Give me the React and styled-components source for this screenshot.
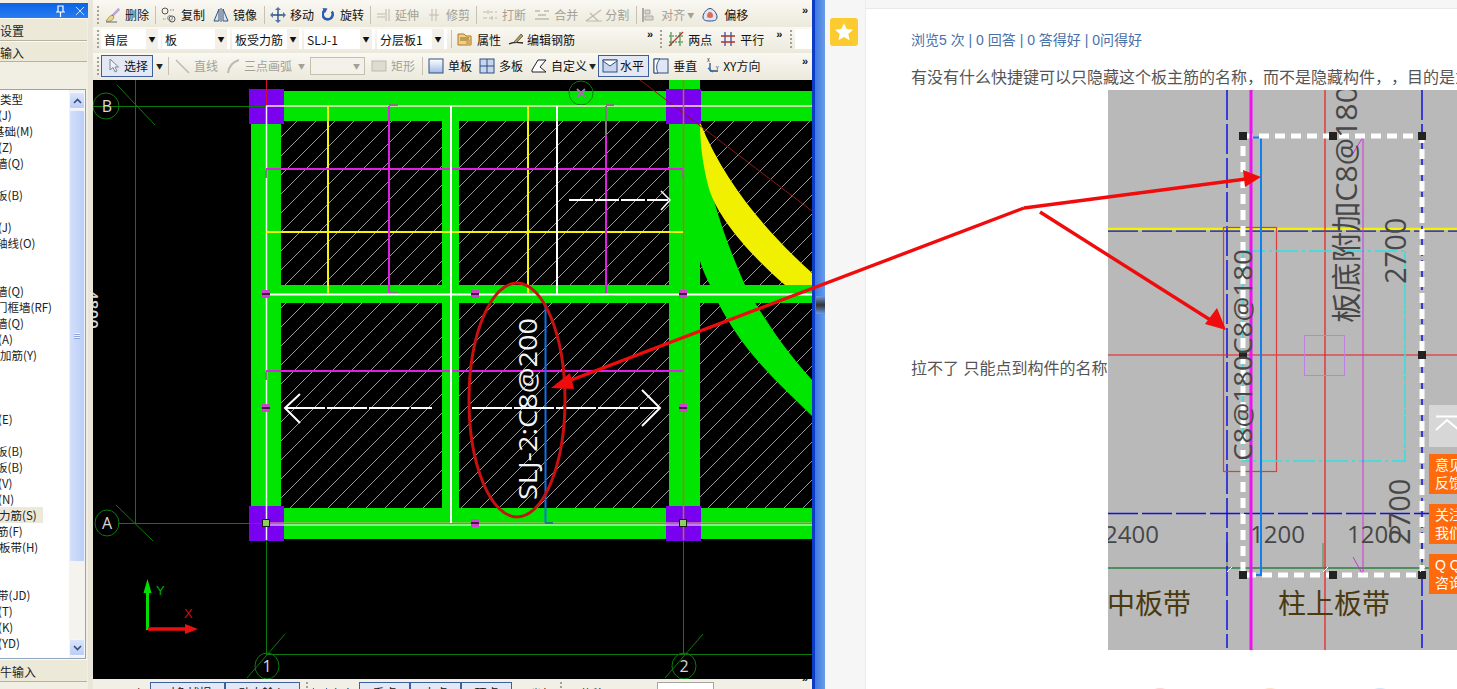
import React from 'react';
import styled, { createGlobalStyle } from 'styled-components';

const Global = createGlobalStyle`
  html, body { margin: 0; padding: 0; width: 1457px; height: 689px; overflow: hidden; background: #fff; }
  body { font-family: "Noto Sans CJK SC", "Liberation Sans", sans-serif; text-spacing-trim: space-all; }
`;

const Page = styled.div`
  position: relative; display: flex; width: 1457px; height: 689px; overflow: hidden;
`;
const CadWindow = styled.div`
  display: flex; width: 812px; height: 689px; flex: none; background: #e9e6d9;
`;

/* ---------- left docked panel ---------- */
const Dock = styled.div`
  width: 88px; flex: none; display: flex; flex-direction: column; padding-top: 3px; box-sizing: border-box;
  background: #f1efe4; font-size: 12px; color: #222; margin-right: 5px; height: 689px;
`;
const DockTitle = styled.div`
  height: 15px; flex: none; display: flex; align-items: center; justify-content: flex-end; gap: 9px; padding-right: 3px;
  background: linear-gradient(#0a62e4, #2a7cf0); color: #fff;
`;
const DockRow = styled.div`
  height: ${p => p.$h}px; flex: none; line-height: ${p => p.$h}px; background: #ece9d8; overflow: hidden; white-space: nowrap;
  border-top: 1px solid #fbfaf5; border-bottom: 1px solid #b5b2a2; box-sizing: border-box; margin-right: 1px;
`;
const DockGap = styled.div`height: 27px; flex: none;`;
const ListBox = styled.div`
  display: flex; height: 570px; flex: none; background: #fff; border: 1px solid #8ea5bd; border-left: 0; box-sizing: border-box; margin-right: 2px;
`;
const ListItems = styled.div`
  width: 69px; flex: none; padding-top: 1px; overflow: hidden;
`;
const ListItem = styled.div`
  height: 16px; line-height: 16px; white-space: nowrap; font-size: 11.5px; width: ${p => p.$active ? 43 : 69}px;
  background: ${p => p.$active ? '#ece9d8' : 'transparent'}; overflow: hidden;
  & > span { display: inline-block; margin-left: ${p => p.$shift || 0}px; }
`;
const ScrollBar = styled.div`
  width: 16px; flex: none; display: flex; flex-direction: column; padding: 2px 0; box-sizing: border-box; background: #f4f3ee;
`;
const ScrollBtn = styled.div`
  height: 17px; flex: none; display: flex; align-items: center; justify-content: center; border-radius: 2px;
  background: linear-gradient(#dbe5fb, #bccdf5); border: 1px solid #f4f6fd; box-sizing: border-box;
`;
const ScrollThumb = styled.div`
  height: 452px; flex: none; display: flex; align-items: center; justify-content: center; border-radius: 2px; margin-top: 1px;
  background: linear-gradient(90deg, #d3defa, #bccef8); border: 1px solid #eef2fd; box-sizing: border-box;
`;
const ScrollSpace = styled.div`flex: 1;`;
const Grip = styled.div`
  width: 6px; height: 6px; background: repeating-linear-gradient(#eef2fd 0 1px, #8ea5d8 1px 2px);
`;

/* ---------- main CAD column ---------- */
const CadMain = styled.div`
  width: 719px; flex: none; display: flex; flex-direction: column; font-size: 12px; color: #111;
`;
const Bar = styled.div`
  height: ${p => p.$h || 27}px; flex: none; display: flex; align-items: center; overflow: hidden; box-sizing: border-box;
  padding-left: ${p => p.$pl ?? 4}px; padding-top: ${p => p.$pt || 0}px; padding-bottom: ${p => p.$pb || 0}px;
  background: linear-gradient(#f9f8f2, #ece9dc); white-space: nowrap;
`;
const GripBar = styled.i`
  display: block; width: 2px; height: 18px; flex: none; margin-right: ${p => p.$mr ?? 6}px; margin-left: ${p => p.$ml || 0}px;
  background: repeating-linear-gradient(#a5a294 0 2px, transparent 2px 4px);
`;
const Tool = styled.div`
  display: flex; align-items: center; flex: none; gap: ${p => p.$gap ?? 4}px; margin-right: ${p => p.$mr ?? 8}px;
  color: ${p => p.$off ? '#a3a195' : '#111'};
  height: 22px; box-sizing: border-box;
  & svg { display: block; flex: none; }
`;
const ActiveTool = styled(Tool)`
  border: 1px solid #3c5f9e; background: #e3e8f4; padding: 0 4px 0 ${p => p.$pl ?? 4}px;
`;
const Sep = styled.i`
  display: block; width: 1px; height: 18px; flex: none; background: #c5c2b4; margin: 0 5px 0 -2px;
`;
const Caret = styled.span`
  width: 7px; overflow: hidden; font-size: 7px; color: ${p => p.$off ? '#a3a195' : '#222'}; margin: 0 ${p => p.$mr ?? 0}px 0 ${p => p.$ml ?? 0}px; flex: none;
`;
const More = styled.span`
  font-family: "Liberation Sans", sans-serif; font-weight: 700; font-size: 11px; letter-spacing: -1px; color: #111; flex: none;
  margin-left: ${p => p.$ml || 'auto'}; margin-right: ${p => p.$mr ?? 5}px; margin-top: -10px;
`;
const Select = styled.div`
  width: ${p => p.$w}px; height: 20px; flex: none; background: #fff; display: flex; align-items: center; justify-content: space-between;
  padding-left: 3px; box-sizing: border-box; margin-right: ${p => p.$mr ?? 3}px; font-size: 12px;
`;
const SelectArrow = styled.span`
  width: 12px; height: 20px; display: flex; align-items: center; justify-content: center; background: #f2f0e8; font-size: 7px; margin-right: 3px;
`;
const DisabledSelect = styled.div`
  width: 55px; height: 18px; flex: none; margin-right: 6px; background: #f3f1ea; border: 1px solid #c3c0b0; box-sizing: border-box;
  display: flex; align-items: center; justify-content: flex-end; padding-right: 4px; font-size: 7px; color: #a3a195;
`;
const Canvas = styled.svg`
  display: block; width: 719px; height: 599px; flex: none; background: #000;
`;
const BottomBar = styled(Bar)`
  align-items: flex-start; padding-top: 3px; background: #f1efe6; height: 10px; padding-left: 7px;
`;
const BottomItem = styled.div`
  flex: none; width: ${p => p.$w}px; height: 22px; line-height: 20px; box-sizing: border-box; margin-right: ${p => p.$mr ?? 0}px;
  border: 1px solid ${p => p.$plain ? '#a8a69a' : '#3c5f9e'}; background: ${p => p.$plain ? '#fff' : '#e3e8f4'};
  text-align: center; font-size: 12px;
`;

/* ---------- window edge + rail ---------- */
const WindowEdge = styled.div`
  position: relative; width: 13px; flex: none; display: flex;
`;
const EdgeDark = styled.div`width: 3px; background: #0c3cc4;`;
const EdgeLight = styled.div`width: 10px; background: linear-gradient(90deg, #3d78e4, #6a9be6);`;
const EdgeNotch = styled.div`
  position: absolute; left: 4px; top: 296px; width: 9px; height: 18px; background: linear-gradient(#6a9be6, #333 50%, #6a9be6);
`;
const Rail = styled.div`
  width: 40px; flex: none; background: #f6f6f6; padding: 18px 0 0 5px; box-sizing: border-box;
`;
const StarButton = styled.div`
  width: 28px; height: 28px; border-radius: 3px; background: #fccb2f; display: flex; align-items: center; justify-content: center;
`;

/* ---------- article ---------- */
const Article = styled.div`
  flex: 1; min-width: 0; border-left: 1px solid #ececec; background: #fff; overflow: hidden; position: relative;
  font-family: "Liberation Sans", "Noto Sans CJK SC", sans-serif;
`;
const ArticleTop = styled.div`height: 8px; background: #f6f6f6; border-bottom: 1px solid #e8e8e8;`;
const ArticleBody = styled.div`padding: 21px 0 0 45px; width: 900px;`;
const Stats = styled.div`
  font-size: 14px; line-height: 20px; color: #4a70a8; white-space: nowrap;
`;
const Para = styled.p`
  margin: 18px 0 0; font-size: 16px; line-height: 20px; color: #555; white-space: nowrap;
`;
const InlineLine = styled.div`
  margin-top: 2px; font-size: 16px; color: #555; white-space: nowrap; line-height: 20px; height: 560px; display: flex; align-items: center;
  & > span { flex: none; width: 197px; margin-top: -2px; }
`;
const Figure = styled.svg`
  display: block; flex: none; width: 380px; height: 560px; background: #b9b9b9;
`;
const ShareRow = styled.div`
  display: flex; gap: 80px; margin: 38px 0 0 234px;
`;
const ShareDot = styled.i`
  display: block; width: 30px; height: 30px; border-radius: 50%; background: ${p => p.$c};
`;
const SideDock = styled.div`
  position: absolute; left: 563px; top: 405px; display: flex; flex-direction: column; align-items: flex-start;
`;
const TopBtn = styled.div`
  width: 40px; height: 42px; background: rgba(240,240,240,.55); margin-bottom: 7px; padding: 10px 0 0 6px; box-sizing: border-box;
`;
const OrangeBtn = styled.div`
  width: 50px; height: 40px; background: #ff6a0c; color: #fff; font-size: 14px; line-height: 18px; padding: 2px 0 0 6px;
  box-sizing: border-box; margin-bottom: 10px; white-space: pre-line;
`;
const Overlay = styled.svg`
  position: absolute; left: 0; top: 0; width: 1457px; height: 689px; pointer-events: none;
`;

/* ---------- icons ---------- */
const S = ({ w = 16, children }) => <svg width={w} height="16" viewBox={`0 0 ${w} 16`} fill="none">{children}</svg>;
const icons = {
  brush: <S><path d="M14 2 7 9" stroke="#555" strokeWidth="1.6"/><path d="M13 1l2 2-6 6-2-1z" fill="#bba8d8"/><path d="M7 8c-3 1-4 4-6 6 3 1 7 0 8-4z" fill="#e8d88a" stroke="#7a6a3a" strokeWidth=".6"/><path d="M1 15h11" stroke="#666"/></S>,
  copy: <S><circle cx="4" cy="4" r="3" stroke="#555"/><circle cx="11" cy="12" r="3" stroke="#555"/><circle cx="9" cy="11" r="2.4" stroke="#888"/><path d="M9 3h5M2 12h3" stroke="#888" strokeDasharray="1.5 1"/></S>,
  mirror: <S><path d="M6 2v12H1zM10 2v12h5z" stroke="#33517f" fill="#dbe4f2"/><path d="M8 1v14" stroke="#33517f"/></S>,
  move: <S><path d="M8 1v14M1 8h14" stroke="#2f4f7f" strokeWidth="1.4"/><path d="M8 0l3 3H5zM8 16l3-3H5zM0 8l3-3v6zM16 8l-3-3v6z" fill="#4c74ae"/></S>,
  rotate: <S w={12}><path d="M9.8 4.5A5 5 0 1 1 3 3.2" stroke="#2a5cb2" strokeWidth="2.6"/><path d="M0.5 1l5 .5L3 6z" fill="#2a5cb2"/></S>,
  extend: <S w={14}><path d="M1 7h8M1 10h8M10 2v12M13 2v12" stroke="#bdbbae"/></S>,
  trim: <S w={12}><path d="M1 8h10M4 2v12M8 2v12" stroke="#bdbbae"/></S>,
  breakx: <S><path d="M1 5h14M1 11h14" stroke="#bdbbae" strokeDasharray="4 2"/><path d="M6 3v4M10 9v4" stroke="#bdbbae"/></S>,
  merge: <S><path d="M1 4h5M10 4h5M1 12h14M4 8h8" stroke="#bdbbae" strokeWidth="1.4"/></S>,
  split: <S w={18}><path d="M1 14 16 3M1 14h16M5 6l8 8" stroke="#bdbbae" strokeWidth="1.2"/></S>,
  align: <S w={12}><path d="M1 1v14" stroke="#aaa" strokeWidth="2"/><path d="M3 3h5v4H3zM3 9h8v4H3z" fill="#d8d6c8" stroke="#aaa"/></S>,
  offset: <S><path d="M8 1.5C11 1.5 15 6 15 10c0 3-2 4-7 4s-7-1-7-4c0-4 4-8.500 7-8.500z" stroke="#2f4f7f" fill="#dfe6f2"/><path d="M8 5c2 0 3 2 3 4 0 1-1 2-3 2s-3-1-3-2c0-2 1-4 3-4z" fill="#e06a5a"/></S>,
  prop: <S><path d="M1 3h6l2 2h5v9H1z" fill="#f2cf82" stroke="#a77a2a"/><path d="M3 7h9M3 9h9" stroke="#8a6a2a"/><path d="M9 10l6-2v6H9z" fill="#d9a860"/></S>,
  edit: <S><path d="M1 13c3-2 8-2 14-1" stroke="#222" strokeWidth="1.4"/><path d="M6 11 13 3l2 2-7 7z" fill="#b89a50" stroke="#333" strokeWidth=".6"/></S>,
  twopt: <S><path d="M3 1v14M12 1v14" stroke="#2f7a2f"/><path d="M1 15 15 1" stroke="#b0352a" strokeWidth="1.2"/><path d="M1 5h14M1 11h14" stroke="#2f7a2f" strokeDasharray="2 1"/></S>,
  para: <S><path d="M5 1v14M11 1v14" stroke="#3a4fa8" strokeWidth="1.3"/><path d="M1 5h14M1 11h14" stroke="#b0352a" strokeWidth="1.3"/></S>,
  pointer: <S><path d="M4 1v11l3-2.5 2 4.500 2-1-2-4h3.500z" fill="#eef1f6" stroke="#7a869a"/></S>,
  line: <S><path d="M2 2l13 13" stroke="#bdbbae" strokeWidth="1.5"/></S>,
  arc: <S><path d="M2 15C3 8 6 4 13 2" stroke="#bdbbae" strokeWidth="2"/></S>,
  rect: <S><rect x="1" y="3" width="14" height="10" fill="#dedcd0" stroke="#bdbbae"/></S>,
  single: <S><rect x="1" y="1" width="14" height="14" fill="url(#gs)" stroke="#334f7f"/><defs><linearGradient id="gs" x1="0" y1="0" x2="0" y2="1"><stop offset="0" stopColor="#fff"/><stop offset="1" stopColor="#9fbbe6"/></linearGradient></defs></S>,
  multi: <S><rect x="1" y="1" width="14" height="14" fill="#c7d6ef" stroke="#334f7f"/><path d="M8 1v14M1 8h14" stroke="#334f7f"/></S>,
  custom: <S><path d="M1 12 7 2h8l-6 7 6 5H1z" stroke="#222" fill="#fff"/></S>,
  horiz: <S><rect x="1" y="2" width="14" height="12" fill="#c7d6ef" stroke="#334f7f"/><path d="M1 3l7 5 7-5v-1H1z" fill="#fff" stroke="#334f7f"/></S>,
  vert: <S><rect x="1" y="1" width="14" height="14" fill="#dfe7f5" stroke="#334f7f"/><path d="M7 1C3 5 3 11 5 15H1V1z" fill="#fff" stroke="#334f7f"/></S>,
  xy: <S><path d="M6 13V5M6 13h8" stroke="#2f4f7f" strokeWidth="1.3"/><path d="M4 10 9 14" stroke="#3a6ab0" strokeWidth="1.5"/><text x="3" y="4" fontSize="5" fill="#222">X</text><text x="12" y="12" fontSize="5" fill="#222">Y</text></S>,
};

const T = ({ i, label, off, mr, gap }) => (
  <Tool $off={off} $mr={mr} $gap={gap}>{icons[i]}{label}</Tool>
);

const listRows = [
  ['类型', 0], ['(J)', -2], ['基础(M)', -7], ['(Z)', -2], ['墙(Q)', -4], ['', 0], ['板(B)', -4], ['', 0], ['(J)', -2], ['轴线(O)', -4],
  ['', 0], ['', 0], ['墙(Q)', -4], ['门框墙(RF)', -4], ['墙(Q)', -4], ['(A)', -2], ['加筋(Y)', 0], ['', 0], ['', 0], ['', 0],
  ['(E)', -2], ['', 0], ['板(B)', -4], ['板(B)', -4], ['(V)', -2], ['(N)', -2], ['力筋(S)', -1, true], ['筋(F)', -3], ['板带(H)', -1], ['', 0],
  ['', 0], ['带(JD)', -3], ['(T)', -2], ['(K)', -2], ['(YD)', -2],
];

const RedDash = '#8a1414';
const PlateDrawing = () => (
  <Canvas viewBox="93 80 719 599">
    <defs>
      <pattern id="hatch" patternUnits="userSpaceOnUse" width="19" height="19">
        <path d="M-2 21 21 -2" stroke="#dcdcdc" strokeWidth=".7"/>
      </pattern>
    </defs>
    {/* hatched slabs */}
    {[[281,121,161,164],[459,121,210,164],[281,303,161,205],[459,303,210,205],[700,121,112,164],[700,303,112,205]].map(([x,y,w,h]) => (
      <rect key={`${x}-${y}`} x={x} y={y} width={w} height={h} fill="url(#hatch)"/>
    ))}
    {/* beams */}
    <g fill="#00e600">
      <rect x="251" y="91" width="561" height="30"/>
      <rect x="251" y="285" width="561" height="18"/>
      <rect x="251" y="508" width="561" height="31"/>
      <rect x="251" y="91" width="30" height="448"/>
      <rect x="442" y="121" width="17" height="387"/>
      <rect x="669" y="80" width="31" height="459"/>
      <path d="M700 121 C703 160 712 210 745 285 C770 330 790 355 812 380 V416 C775 380 735 345 710 285 C705 275 702 268 699 258 Z"/>
    </g>
    <path d="M700 122 C725 185 770 235 812 273 V285 H785 C750 255 715 215 708 185 C703 165 700 145 700 122Z" fill="#f0f000"/>
    {/* columns */}
    <g fill="#7a00f0">
      <rect x="249" y="89" width="35" height="35"/>
      <rect x="666" y="89" width="35" height="35"/>
      <rect x="249" y="506" width="35" height="35"/>
      <rect x="666" y="506" width="35" height="35"/>
    </g>
    {/* grid */}
    <g stroke="#0a7a0a" fill="none">
      <path d="M93 106.5H266M118 523.5H812M135.5 80V523M266.5 523V654M683.5 523V654M266 654.5H812"/>
      <path d="M117 85 155 125M116 505 153 541M247 678 285 634M665 678 703 634"/>
      <circle cx="106" cy="106" r="13"/>
      <ellipse cx="107" cy="523" rx="12" ry="13"/>
      <ellipse cx="267" cy="666" rx="12" ry="13"/>
      <ellipse cx="684" cy="666" rx="12" ry="13"/>
      <circle cx="581" cy="93" r="12"/>
    </g>
    <g fontFamily='"Open Sans", sans-serif' fontSize="16" fill="#d8d8d8" textAnchor="middle">
      <text x="107" y="112">B</text>
      <text x="107" y="529">A</text>
      <text x="267" y="672">1</text>
      <text x="684" y="672">2</text>
    </g>
    <path d="M577 89l8 8M585 89l-8 8" stroke="#a070b0" strokeWidth="2"/>
    <text transform="translate(86 290) rotate(90)" fontFamily='"Open Sans", sans-serif' fontSize="17" fontWeight="600" fill="#d8d8d8">4800</text>
    {/* red construction lines */}
    <path d="M266.5 80V106M683.5 80V106" stroke="#d01030"/>
    <path d="M640 80 812 211" stroke={RedDash}/>
    {/* rebar */}
    <g fill="none">
      <path d="M266 106 H812" stroke="#f6e8d0" strokeWidth="1.5"/>
      <path d="M266 523 H812" stroke="#e8b080" strokeWidth="1"/>
      <path d="M266 525 H812" stroke="#fff" strokeWidth="1"/>
      <path d="M266.5 106V540" stroke="#f0f0f0" strokeWidth="1.5"/>
      <path d="M683.5 80V540" stroke="#a87820" strokeWidth="1.5"/>
      <path d="M328 106V293M528 106V293M266 232H683" stroke="#f4f40a" strokeWidth="2"/>
      <path d="M266 169H683M389 106V293M606 122V295" stroke="#e020e0" strokeWidth="2"/>
      <path d="M266 371H683" stroke="#e020e0" strokeWidth="2"/>
      <path d="M606 106V135M389 105H398M389 293H398M606 105H614M266 170V178M683 169V178M266 372V380M451 169V178" stroke="#807878" strokeWidth="2"/>
      <path d="M607 295H614" stroke="#e020e0" strokeWidth="2"/>
      <path d="M266 294.5H812" stroke="#fff" strokeWidth="2"/>
      <path d="M451 106V523M557 106V295" stroke="#fff" strokeWidth="2"/>
      <path d="M545.5 303V523" stroke="#1070e8" strokeWidth="2"/>
      <path d="M545 523H553" stroke="#208070" strokeWidth="2"/>
      <path d="M569 200H668" stroke="#fff" strokeWidth="2" strokeDasharray="24 2"/>
      <path d="M661 191 670 200 661 210" stroke="#fff" strokeWidth="1.5"/>
      <path d="M285 408H432" stroke="#fff" strokeWidth="2" strokeDasharray="40 2"/>
      <path d="M300 394 285 408 300 423" stroke="#fff" strokeWidth="2"/>
      <path d="M472 408H660" stroke="#fff" strokeWidth="2" strokeDasharray="40 2"/>
      <path d="M642 390 660 408 642 426" stroke="#fff" strokeWidth="2"/>
    </g>
    {/* grips */}
    {[[266,294],[475,294],[683,294],[266,408],[683,408],[475,523]].map(([x,y]) => (
      <g key={`${x}-${y}`}>
        <rect x={x-4} y={y-4} width="8" height="8" fill="#d040d0"/>
        <path d={`M${x-4} ${y}H${x+4}`} stroke="#111" strokeWidth="1.5"/>
      </g>
    ))}
    {[[266,523],[683,523]].map(([x,y]) => (
      <rect key={x} x={x-3.5} y={y-3.5} width="7" height="7" fill="#8cd060" stroke="#1a1a1a"/>
    ))}
    {/* label and its call-out */}
    <text transform="translate(537 500) rotate(-90)" fontFamily='"Open Sans", sans-serif' fontSize="26" fill="#f4f4f4" textLength="182" lengthAdjust="spacingAndGlyphs">SLJ-2:C8@200</text>
    <ellipse cx="517" cy="400" rx="48" ry="117" fill="none" stroke="#c81010" strokeWidth="3"/>
    {/* UCS */}
    <path d="M147.5 590V630" stroke="#00e000" strokeWidth="3"/>
    <path d="M147.5 579l4 14h-8z" fill="#00e000"/>
    <path d="M148 629H187" stroke="#e81010" strokeWidth="3.5"/>
    <path d="M198 629l-13-5v10z" fill="#e81010"/>
    <text x="156" y="595" fontFamily='"Liberation Sans", sans-serif' fontSize="13" fill="#00b000">Y</text>
    <text x="184" y="618" fontFamily='"Liberation Sans", sans-serif' fontSize="13" fill="#c81010">X</text>
  </Canvas>
);

const SectionFigure = () => (
  <Figure viewBox="1108 90 380 560">
    <g fill="none">
      <path d="M1108 231H1488M1108 513.5H1488" stroke="#1010e0" strokeWidth="1.5" strokeDasharray="30 4"/>
      <path d="M1108 229H1488" stroke="#f4f400" strokeWidth="2.5"/>
      <path d="M1108 568H1430" stroke="#4f8f5f" strokeWidth="2"/>
      <path d="M1227 543V568M1323 543V568M1422 543V568" stroke="#3a8f4a" strokeWidth="1"/>
      <path d="M1227 90V648M1422 90V648" stroke="#1010e0" strokeWidth="1.5" strokeDasharray="30 4"/>
      <path d="M1325 90V650M1108 355H1488" stroke="#f01818" strokeWidth="1.2"/>
      <rect x="1223.5" y="227.5" width="53" height="244" stroke="#d84040" strokeWidth="1.2"/>
      <path d="M1243 251H1405V461H1243M1405 251V461M1243 251V461" stroke="#30e0e0" strokeWidth="1.5" strokeDasharray="22 4 3 4"/>
      <rect x="1304.5" y="335.5" width="40" height="40" stroke="#c080e0"/>
      <path d="M1363 136V575M1352 155 1363 137M1353 557 1363 575" stroke="#d030e0" strokeWidth="1"/>
      <path d="M1251 250V461" stroke="#20b020" strokeWidth="2" strokeDasharray="10 6"/>
      <path d="M1253 137.5H1261V575H1253" stroke="#1080f0" strokeWidth="2"/>
      <path d="M1243 136H1422V575H1243Z" stroke="#fff" strokeWidth="5" strokeDasharray="10 6"/>
      <path d="M1251 90V650" stroke="#f010f0" strokeWidth="3"/>
    </g>
    {[[1243,136],[1333,136],[1422,136],[1243,355],[1422,355],[1243,575],[1333,575],[1422,575]].map(([x,y]) => (
      <rect key={`${x}-${y}`} x={x-4} y={y-4} width="8" height="8" fill="#222"/>
    ))}
    <path d="M1227 572l5-5M1323 572l5-5M1420 572l5-5" stroke="#fff"/>
    <g fontFamily='"Open Sans", "Noto Sans CJK SC", sans-serif' fill="#474747">
      <text transform="translate(1357 323) rotate(-90)" fontSize="30" textLength="237" lengthAdjust="spacingAndGlyphs">板底附加C8@180</text>
      <text transform="translate(1406 284) rotate(-90)" fontSize="29">2700</text>
      <text transform="translate(1410 545) rotate(-90)" fontSize="29">2700</text>
      <text transform="translate(1252 461) rotate(-90)" fontSize="25" textLength="212" lengthAdjust="spacingAndGlyphs">C8@180C8@180</text>
      <text x="1104" y="543" fontSize="24">2400</text>
      <text x="1250" y="543" fontSize="24">1200</text>
      <text x="1347" y="543" fontSize="24">1200</text>
    </g>
    <g fontFamily='"Noto Sans CJK SC", sans-serif' fontSize="28" fill="#4a3a10">
      <text x="1107" y="614">中板带</text>
      <text x="1278" y="614">柱上板带</text>
    </g>
  </Figure>
);

const CalloutArrows = () => (
  <Overlay viewBox="0 0 1457 689">
    <g stroke="#f00c0c" strokeWidth="3.4" fill="none">
      <path d="M1024 208 1246 179"/>
      <path d="M1024 208 566 382"/>
      <path d="M1040 212 1212 321"/>
    </g>
    <g fill="#f00c0c">
      <path d="M1261 177 1243 170 1245 187Z"/>
      <path d="M551 388 570 373 574 389Z"/>
      <path d="M1226 330 1205 324 1217 308Z"/>
    </g>
  </Overlay>
);

export default function App() {
  return (
    <>
      <Global />
      <Page>
        <CadWindow>
          <Dock>
            <DockTitle>
              <svg width="11" height="12" viewBox="0 0 11 12" fill="none"><path d="M3 1h5v6H3zM1 7h9M5.5 7v5" stroke="#fff" strokeWidth="1.2"/></svg>
              <svg width="10" height="10" viewBox="0 0 10 10"><path d="M1 1l8 8M9 1 1 9" stroke="#cfe2ff" strokeWidth="1"/></svg>
            </DockTitle>
            <DockRow $h={23}>设置</DockRow>
            <DockRow $h={21}>输入</DockRow>
            <DockGap />
            <ListBox>
              <ListItems>
                {listRows.map(([t, s, a], i) => (
                  <ListItem key={i} $shift={s} $active={a}><span>{t}</span></ListItem>
                ))}
              </ListItems>
              <ScrollBar>
                <ScrollBtn><svg width="9" height="6" viewBox="0 0 9 6" fill="none"><path d="M1 5l3.5-3.5L8 5" stroke="#33507f" strokeWidth="1.6"/></svg></ScrollBtn>
                <ScrollThumb><Grip /></ScrollThumb>
                <ScrollSpace />
                <ScrollBtn><svg width="9" height="6" viewBox="0 0 9 6" fill="none"><path d="M1 1l3.5 3.5L8 1" stroke="#33507f" strokeWidth="1.6"/></svg></ScrollBtn>
              </ScrollBar>
            </ListBox>
            <DockRow $h={23}>牛输入</DockRow>
          </Dock>
          <CadMain>
            <Bar $h={27} $pt={2}>
              <GripBar $mr={6} />
              <T i="brush" label="删除" />
              <Sep />
              <T i="copy" label="复制" />
              <T i="mirror" label="镜像" mr={9} />
              <Sep />
              <T i="move" label="移动" />
              <T i="rotate" label="旋转" gap={6} mr={8} />
              <Sep />
              <T i="extend" label="延伸" off gap={5} mr={9} />
              <T i="trim" label="修剪" off gap={6} />
              <Sep />
              <T i="breakx" label="打断" off />
              <T i="merge" label="合并" off mr={7} />
              <T i="split" label="分割" off gap={2} mr={9} />
              <Sep />
              <T i="align" label="对齐" off gap={7} mr={2} />
              <Caret $off $mr={8}>▼</Caret>
              <T i="offset" label="偏移" gap={6} />
              <More>»</More>
            </Bar>
            <Bar $h={26} $pb={2}>
              <GripBar $mr={2} />
              <Select $w={60} $mr={1}>首层<SelectArrow>▼</SelectArrow></Select>
              <Select $w={68} $mr={2}>板<SelectArrow>▼</SelectArrow></Select>
              <Select $w={70} $mr={2}>板受力筋<SelectArrow>▼</SelectArrow></Select>
              <Select $w={71} $mr={2}>SLJ-1<SelectArrow>▼</SelectArrow></Select>
              <Select $w={70} $mr={6}>分层板1<SelectArrow>▼</SelectArrow></Select>
              <Sep />
              <T i="prop" label="属性" mr={7} />
              <T i="edit" label="编辑钢筋" mr={0} gap={3} />
              <More $ml="72px" $mr={8}>»</More>
              <GripBar $mr={6} />
              <T i="twopt" label="两点" mr={8} />
              <T i="para" label="平行" mr={0} />
              <More $ml="12px" $mr={9}>»</More>
              <GripBar $mr={3} />
              <Select $w={20} $mr={0}></Select>
            </Bar>
            <Bar $h={27} $pl={6} $pb={2}>
              <GripBar $mr={2} $ml={-2} />
              <ActiveTool $gap={2} $mr={3} $pl={4}>{icons.pointer}选择</ActiveTool>
              <Caret $mr={7}>▼</Caret>
              <Sep />
              <T i="line" label="直线" off />
              <T i="arc" label="三点画弧" off gap={2} mr={6} />
              <Caret $off $mr={5}>▼</Caret>
              <DisabledSelect>▼</DisabledSelect>
              <T i="rect" label="矩形" off mr={9} />
              <Sep />
              <T i="single" label="单板" mr={7} />
              <T i="multi" label="多板" />
              <T i="custom" label="自定义" mr={2} />
              <Caret $mr={2}>▼</Caret>
              <ActiveTool $gap={2} $mr={4} $pl={3}>{icons.horiz}水平</ActiveTool>
              <T i="vert" label="垂直" mr={7} />
              <T i="xy" label="XY方向" gap={3} mr={0} />
              <More>»</More>
            </Bar>
            <PlateDrawing />
            <BottomBar>
              <Tool $mr={5} $gap={5}><svg width="16" height="16"><rect x="0" y="4" width="16" height="10" fill="#d89090"/></svg>正交</Tool>
              <BottomItem $w={75}>对象捕捉</BottomItem>
              <BottomItem $w={75}>动态输入</BottomItem>
              <GripBar $ml={6} $mr={4} />
              <Tool $mr={5} $gap={2}><svg width="16" height="16"><path d="M1 3l7 8 7-8" stroke="#3c5f9e" fill="none"/></svg>交点</Tool>
              <BottomItem $w={51}>垂点</BottomItem>
              <BottomItem $w={51}>中点</BottomItem>
              <BottomItem $w={51}>顶点</BottomItem>
              <Tool $mr={6} $gap={2}><svg width="16" height="16"><path d="M3 6l3 3M11 6l3 3" stroke="#777"/></svg>坐标</Tool>
              <GripBar $mr={6} />
              <Tool $mr={53}>不偏移</Tool>
              <BottomItem $plain $w={57}>0</BottomItem>
              <More $ml="auto" $mr={5}>»</More>
            </BottomBar>
          </CadMain>
        </CadWindow>
        <WindowEdge>
          <EdgeDark />
          <EdgeLight />
          <EdgeNotch />
        </WindowEdge>
        <Rail>
          <StarButton>
            <svg width="20" height="20" viewBox="0 0 24 24"><path d="M12 1.5l3.2 6.9 7.5.9-5.5 5.1 1.5 7.4L12 18.1l-6.7 3.7 1.5-7.4L1.3 9.3l7.5-.9z" fill="#fff"/></svg>
          </StarButton>
        </Rail>
        <Article>
          <ArticleTop />
          <ArticleBody>
            <Stats>浏览5 次 | 0 回答 | 0 答得好 | 0问得好</Stats>
            <Para>有没有什么快捷键可以只隐藏这个板主筋的名称，而不是隐藏构件，，目的是为了</Para>
            <InlineLine>
              <span>拉不了 只能点到构件的名称</span>
              <SectionFigure />
            </InlineLine>
            <ShareRow>
              <ShareDot $c="#fdd5d5" />
              <ShareDot $c="#fde3c8" />
              <ShareDot $c="#cfe8fb" />
            </ShareRow>
          </ArticleBody>
          <SideDock>
            <TopBtn>
              <svg width="24" height="18" viewBox="0 0 24 18" fill="none"><path d="M1 1.500H24M1 15 12 5l12 10" stroke="#fff" strokeWidth="2"/></svg>
            </TopBtn>
            <OrangeBtn>{'意见\n反馈'}</OrangeBtn>
            <OrangeBtn>{'关注\n我们'}</OrangeBtn>
            <OrangeBtn>{'Q Q\n咨询'}</OrangeBtn>
          </SideDock>
        </Article>
        <CalloutArrows />
      </Page>
    </>
  );
}
